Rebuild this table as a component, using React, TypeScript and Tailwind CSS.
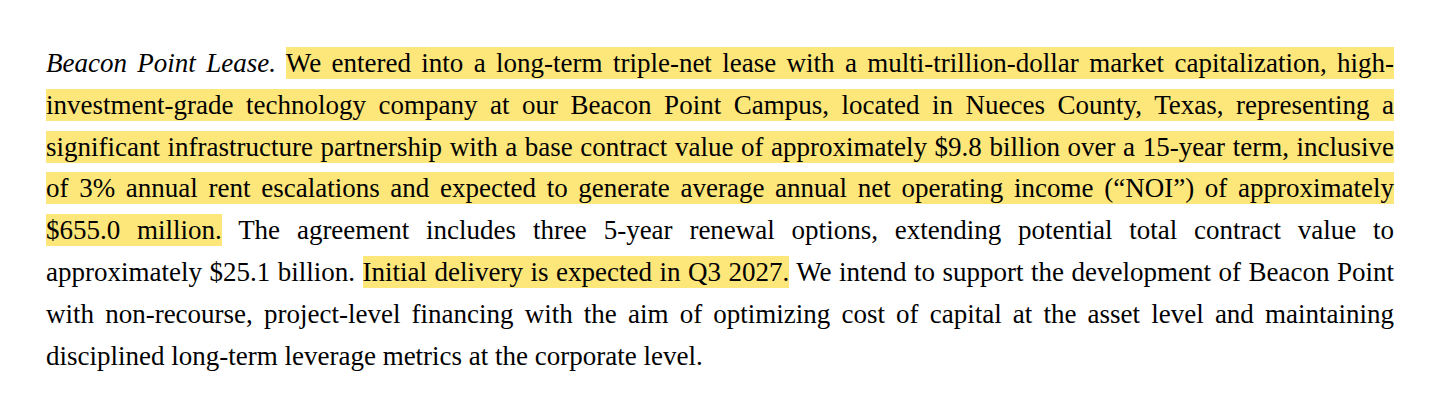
export default function App() {
  return (
    <main className="w-[1440px] h-[415px] bg-white px-[46px] pt-[43px]">
      <p
        className="text-[27px] leading-[41.8px] text-justify text-black"
        style={{ fontFamily: '"Liberation Serif", "Times New Roman", serif' }}
      >
        <em>Beacon Point Lease.</em>{' '}
        <mark className="bg-[#fee77a] text-black py-[1px]">
          We entered into a long-term triple-net lease with a multi-trillion-dollar market capitalization,
          high-investment-grade technology company at our Beacon Point Campus, located in Nueces County, Texas,
          representing a significant infrastructure partnership with a base contract value of approximately $9.8
          billion over a 15-year term, inclusive of 3% annual rent escalations and expected to generate average
          annual net operating income (&ldquo;NOI&rdquo;) of approximately $655.0 million.
        </mark>{' '}
        The agreement includes three 5-year renewal options, extending potential total contract value to
        approximately $25.1 billion.{' '}
        <mark className="bg-[#fee77a] text-black py-[1px]">Initial delivery is expected in Q3 2027.</mark> We
        intend to support the development of Beacon Point with non-recourse, project-level financing with the aim
        of optimizing cost of capital at the asset level and maintaining disciplined long-term leverage metrics at
        the corporate level.
      </p>
    </main>
  )
}
